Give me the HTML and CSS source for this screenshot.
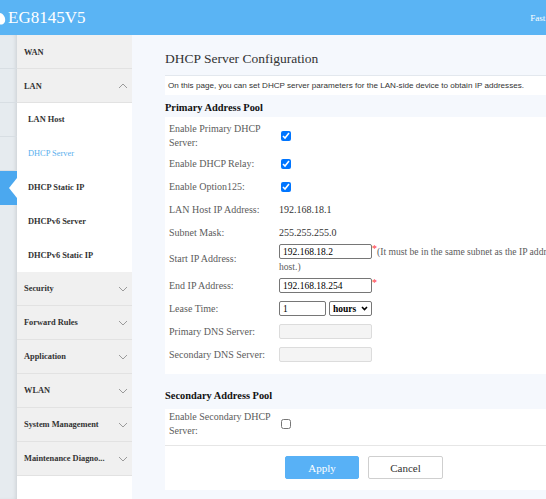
FILE: index.html
```html
<!DOCTYPE html>
<html lang="en">

<head>
  <meta charset="UTF-8" />
  <meta name="viewport" content="width=device-width, initial-scale=1.0" />
  <title>DHCP Server Configuration</title>
  <link rel="stylesheet" href="styles.css">
</head>

<body>
  <header class="topbar">
    <svg class="logo" width="6" height="13" viewBox="0 0 6 13">
      <path d="M0 1 C3 1.5 5.2 4.5 5.2 8 C5.2 10 4 11.8 2.2 12.4 L0 12.4 Z" fill="#fff" />
    </svg>
    <span class="brand">EG8145V5</span>
    <span class="quick">Fast Setup</span>
  </header>

  <div class="layout">
    <div class="rail">
      <div class="rail-cell"></div>
      <div class="rail-cell"></div>
      <div class="rail-cell"></div>
      <div class="rail-cell"></div>
      <div class="rail-cell current"></div>
    </div>

    <nav class="menu">
      <div class="menu-item">WAN</div>
      <div class="menu-item">LAN
        <svg class="chev" width="10" height="6" viewBox="0 0 10 6"><path d="M1 5l4-4 4 4" /></svg>
      </div>
      <ul class="submenu">
        <li>LAN Host</li>
        <li class="active">DHCP Server</li>
        <li>DHCP Static IP</li>
        <li>DHCPv6 Server</li>
        <li>DHCPv6 Static IP</li>
      </ul>
      <div class="menu-item">Security
        <svg class="chev" width="10" height="6" viewBox="0 0 10 6"><path d="M1 1l4 4 4-4" /></svg>
      </div>
      <div class="menu-item">Forward Rules
        <svg class="chev" width="10" height="6" viewBox="0 0 10 6"><path d="M1 1l4 4 4-4" /></svg>
      </div>
      <div class="menu-item">Application
        <svg class="chev" width="10" height="6" viewBox="0 0 10 6"><path d="M1 1l4 4 4-4" /></svg>
      </div>
      <div class="menu-item">WLAN
        <svg class="chev" width="10" height="6" viewBox="0 0 10 6"><path d="M1 1l4 4 4-4" /></svg>
      </div>
      <div class="menu-item">System Management
        <svg class="chev" width="10" height="6" viewBox="0 0 10 6"><path d="M1 1l4 4 4-4" /></svg>
      </div>
      <div class="menu-item">Maintenance Diagno...
        <svg class="chev" width="10" height="6" viewBox="0 0 10 6"><path d="M1 1l4 4 4-4" /></svg>
      </div>
    </nav>

    <main class="content">
      <div class="page">
        <h1 class="page-title">DHCP Server Configuration</h1>
        <p class="intro">On this page, you can set DHCP server parameters for the LAN-side device to obtain IP addresses.</p>

        <h2 class="pool-title">Primary Address Pool</h2>
        <div class="panel">
          <div class="row tall">
            <span class="label">Enable Primary DHCP Server:</span>
            <span class="value"><input type="checkbox" checked /></span>
          </div>
          <div class="row">
            <span class="label">Enable DHCP Relay:</span>
            <span class="value"><input type="checkbox" checked /></span>
          </div>
          <div class="row">
            <span class="label">Enable Option125:</span>
            <span class="value"><input type="checkbox" checked /></span>
          </div>
          <div class="row">
            <span class="label">LAN Host IP Address:</span>
            <span class="value">192.168.18.1</span>
          </div>
          <div class="row">
            <span class="label">Subnet Mask:</span>
            <span class="value">255.255.255.0</span>
          </div>
          <div class="row">
            <span class="label">Start IP Address:</span>
            <div class="value stack">
              <div class="field-line">
                <input class="text-in" type="text" value="192.168.18.2" />
                <span class="req">*</span>
                <span class="note">(It must be in the same subnet as the IP address of the LAN</span>
              </div>
              <div class="note">host.)</div>
            </div>
          </div>
          <div class="row">
            <span class="label">End IP Address:</span>
            <div class="value field-line">
              <input class="text-in" type="text" value="192.168.18.254" />
              <span class="req">*</span>
            </div>
          </div>
          <div class="row">
            <span class="label">Lease Time:</span>
            <div class="value field-line">
              <input class="text-in short" type="text" value="1" />
              <span class="select-wrap">
                <select class="unit">
                  <option>hours</option>
                  <option>minutes</option>
                  <option>days</option>
                </select>
                <svg class="select-arrow" width="7" height="5" viewBox="0 0 7 5"><path d="M1 1l2.5 2.5L6 1" /></svg>
              </span>
            </div>
          </div>
          <div class="row">
            <span class="label">Primary DNS Server:</span>
            <span class="value"><input class="text-in" type="text" disabled /></span>
          </div>
          <div class="row">
            <span class="label">Secondary DNS Server:</span>
            <span class="value"><input class="text-in" type="text" disabled /></span>
          </div>
        </div>

        <h2 class="pool-title second">Secondary Address Pool</h2>
        <div class="panel compact">
          <div class="row tall">
            <span class="label">Enable Secondary DHCP Server:</span>
            <span class="value"><input type="checkbox" /></span>
          </div>
        </div>

        <div class="actions">
          <button class="btn primary" type="button">Apply</button>
          <button class="btn" type="button">Cancel</button>
        </div>
      </div>
    </main>
  </div>
</body>

</html>
```

FILE: styles.css
```css
body {
  margin: 0;
  height: 499px;
  overflow: hidden;
  font-family: 'Liberation Serif', 'Times New Roman', serif;
  color: #333;
  background: #f5f8fd;
}

.topbar {
  height: 35px;
  background: #5ab4f4;
  display: flex;
  align-items: center;
  overflow: hidden;
  color: white;
}

.logo {
  flex: none;
  margin-top: 1px;
}

.brand {
  margin-left: 2px;
  font-size: 17px;
}

.quick {
  margin-left: auto;
  margin-right: -22px;
  font-size: 9px;
  white-space: nowrap;
}

.layout {
  display: flex;
  height: 464px;
}

/* narrow icon strip on the far left */
.rail {
  width: 17px;
  flex: none;
  background: #e6ebef;
  box-shadow: inset -3px 0 4px -2px rgba(0, 0, 0, 0.12);
}

.rail-cell {
  height: 34px;
  box-sizing: border-box;
  border-bottom: 1px solid #d8dee3;
}

.rail-cell.current {
  position: relative;
  background: #4ba8ef;
  border-bottom: none;
}

.rail-cell.current::after {
  content: "";
  position: absolute;
  right: 0;
  top: 50%;
  margin-top: -10px;
  border-top: 10px solid transparent;
  border-bottom: 10px solid transparent;
  border-right: 8px solid white;
}

.menu {
  width: 115px;
  flex: none;
  background: white;
  font-size: 8.4px;
  font-weight: bold;
}

.menu-item {
  height: 34px;
  box-sizing: border-box;
  display: flex;
  align-items: center;
  justify-content: space-between;
  padding: 1px 4px 0 7px;
  background: #f0f0f0;
  border-bottom: 1px solid #e2e2e2;
}

.chev path {
  fill: none;
  stroke: #9a9a9a;
  stroke-width: 1;
}

.submenu {
  list-style: none;
  margin: 0;
  padding: 0;
}

.submenu li {
  height: 33.8px;
  display: flex;
  align-items: center;
  padding-left: 11px;
}

.submenu li.active {
  color: #5ab0ee;
  font-weight: normal;
}

.content {
  flex: 1;
  overflow: hidden;
}

.page {
  width: 480px;
  margin-left: 33px;
}

.page-title {
  margin: 0;
  padding: 15px 0 7px;
  font-size: 13.5px;
  line-height: 18px;
  font-weight: normal;
  border-bottom: 1px solid #e3e8ee;
}

.intro {
  margin: 0;
  padding: 4px 3px;
  background: white;
  font-family: 'Liberation Sans', Arial, sans-serif;
  font-size: 8.1px;
  line-height: 11px;
}

.pool-title {
  margin: 0;
  padding-top: 4px;
  font-size: 10.4px;
  line-height: 18px;
  color: #111;
}

.pool-title.second {
  padding-top: 13px;
  margin-bottom: 4px;
}

.panel {
  background: white;
  padding: 3px 0 8px;
}

.panel.compact {
  padding: 1px 0 7px;
}

.row {
  display: flex;
  align-items: center;
  min-height: 23px;
  padding-left: 4px;
  font-size: 10px;
}

.row.tall {
  padding: 2px 0 2px 4px;
}

.panel.compact .row.tall {
  padding: 0 0 0 4px;
}

.label {
  width: 110px;
  flex: none;
  line-height: 14px;
  color: #5c5c5c;
}

.value {
  display: flex;
  align-items: center;
  color: #333;
}

.value input[type="checkbox"] {
  width: 10px;
  height: 10px;
  margin: 0 0 0 2px;
  accent-color: #0075ff;
}

.stack {
  flex-direction: column;
  align-items: flex-start;
  line-height: 15px;
}

.field-line {
  display: flex;
  align-items: center;
  height: 15px;
  white-space: nowrap;
}

.text-in {
  width: 93px;
  height: 15px;
  box-sizing: border-box;
  margin: 0;
  padding: 0 3px;
  border: 1px solid #767676;
  border-radius: 2px;
  font-family: 'Liberation Serif', serif;
  font-size: 9.5px;
  color: #000;
}

.text-in.short {
  width: 47px;
}

.text-in:disabled {
  background: #f4f4f4;
  border-color: #dcdcdc;
}

.select-wrap {
  position: relative;
  display: flex;
  margin-left: 3px;
}

.unit {
  appearance: none;
  width: 43px;
  height: 15px;
  margin: 0;
  padding: 0 0 0 3px;
  border: 1px solid #767676;
  border-radius: 2px;
  background: white;
  font-family: 'Liberation Serif', serif;
  font-size: 9.5px;
  font-weight: bold;
  color: #000;
}

.select-arrow {
  position: absolute;
  right: 4px;
  top: 5px;
  pointer-events: none;
}

.select-arrow path {
  fill: none;
  stroke: #000;
  stroke-width: 1.6;
}

.req {
  align-self: flex-start;
  color: #f33;
  font-size: 10px;
  line-height: 10px;
}

.note {
  color: #5c5c5c;
  font-size: 9.6px;
}

.actions {
  display: flex;
  gap: 9px;
  padding: 10px 0 11px 120px;
  background: white;
  border-top: 1px solid #e6e6e6;
}

.btn {
  width: 75px;
  height: 23px;
  border: 1px solid #cfcfcf;
  border-radius: 2px;
  background: white;
  color: #333;
  font-family: 'Liberation Serif', serif;
  font-size: 11px;
  cursor: pointer;
}

.btn.primary {
  width: 74px;
  background: #58b1f6;
  border-color: #58b1f6;
  color: white;
}
```
